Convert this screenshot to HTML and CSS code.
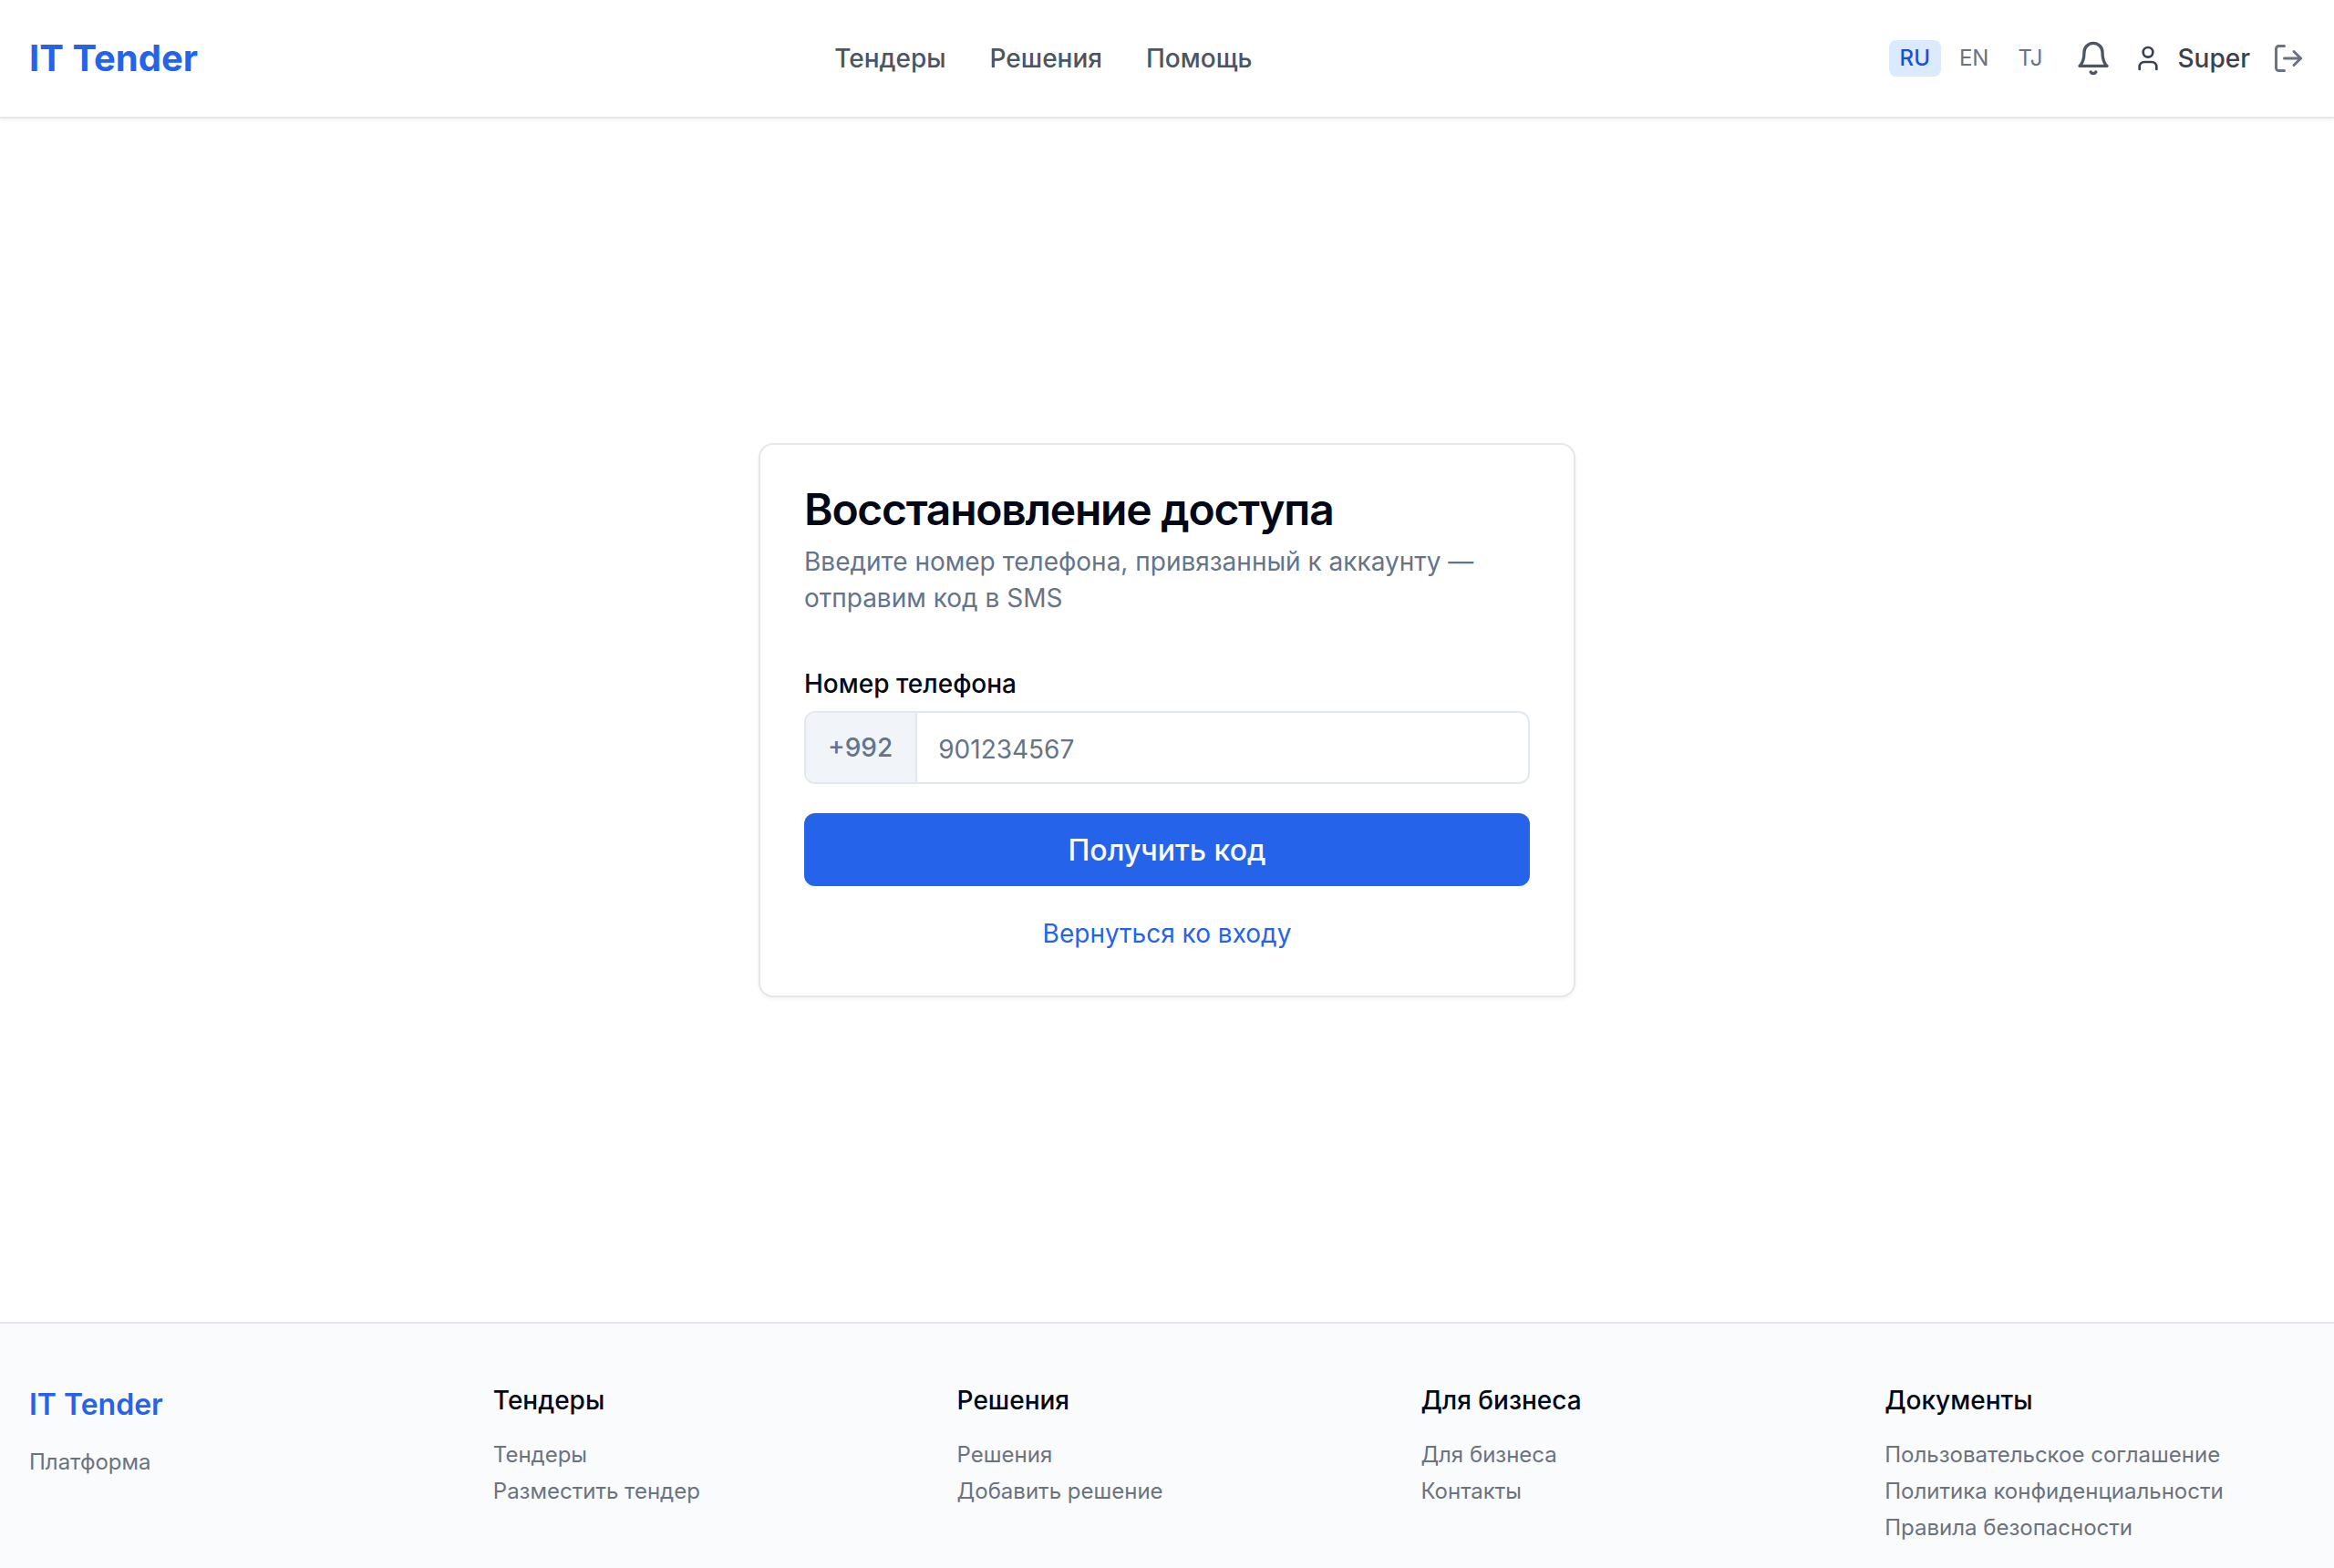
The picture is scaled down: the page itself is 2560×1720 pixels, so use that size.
FILE: index.html
```html
<!DOCTYPE html>
<html lang="ru">
<head>
    <meta charset="UTF-8">
    <meta name="viewport" content="width=device-width, initial-scale=1.0">
    <title>IT Tender</title>
    <link rel="stylesheet" href="styles.css">
</head>
<body>

<!-- Header -->
<header class="header">
    <a class="logo" href="#">IT Tender</a>
    <nav class="nav">
        <a href="#">Тендеры</a>
        <a href="#">Решения</a>
        <a href="#">Помощь</a>
    </nav>
    <div class="header-actions">
        <div class="langs">
            <button class="lang active">RU</button>
            <button class="lang">EN</button>
            <button class="lang">TJ</button>
        </div>
        <svg class="icon icon-bell" viewBox="0 0 24 24">
            <path d="M6 8a6 6 0 0 1 12 0c0 7 3 9 3 9H3s3-2 3-9"/>
            <path d="M10.3 21a1.94 1.94 0 0 0 3.4 0"/>
        </svg>
        <a class="user" href="#">
            <svg class="icon icon-user" viewBox="0 0 24 24">
                <path d="M19 21v-2a4 4 0 0 0-4-4H9a4 4 0 0 0-4 4v2"/>
                <circle cx="12" cy="7" r="4"/>
            </svg>
            <span>Super</span>
        </a>
        <svg class="icon icon-logout" viewBox="0 0 24 24">
            <path d="M9 21H5a2 2 0 0 1-2-2V5a2 2 0 0 1 2-2h4"/>
            <polyline points="16 17 21 12 16 7"/>
            <line x1="21" x2="9" y1="12" y2="12"/>
        </svg>
    </div>
</header>

<!-- Password recovery form -->
<main class="main">
    <div class="card">
        <h1>Восстановление доступа</h1>
        <p class="description">Введите номер телефона, привязанный к аккаунту — отправим код в SMS</p>
        <form class="form">
            <label for="phone">Номер телефона</label>
            <div class="phone">
                <span class="prefix">+992</span>
                <input type="tel" id="phone" placeholder="901234567">
            </div>
            <button class="button" type="button">Получить код</button>
            <a class="back-link" href="#">Вернуться ко входу</a>
        </form>
    </div>
</main>

<!-- Footer -->
<footer class="footer">
    <div>
        <div class="footer-logo">IT Tender</div>
        <p class="footer-text">Платформа</p>
    </div>
    <div>
        <h4>Тендеры</h4>
        <ul>
            <li><a href="#">Тендеры</a></li>
            <li><a href="#">Разместить тендер</a></li>
        </ul>
    </div>
    <div>
        <h4>Решения</h4>
        <ul>
            <li><a href="#">Решения</a></li>
            <li><a href="#">Добавить решение</a></li>
        </ul>
    </div>
    <div>
        <h4>Для бизнеса</h4>
        <ul>
            <li><a href="#">Для бизнеса</a></li>
            <li><a href="#">Контакты</a></li>
        </ul>
    </div>
    <div>
        <h4>Документы</h4>
        <ul>
            <li><a href="#">Пользовательское соглашение</a></li>
            <li><a href="#">Политика конфиденциальности</a></li>
            <li><a href="#">Правила безопасности</a></li>
        </ul>
    </div>
</footer>

</body>
</html>
```
FILE: styles.css
```css
* { box-sizing: border-box; margin: 0; padding: 0; }
body { display: flex; flex-direction: column; height: 100vh; overflow: hidden; font-family: Inter, sans-serif; font-size: 32px; line-height: 48px; color: #020817; background-color: #fff; }
a { color: inherit; text-decoration: none; }
button, input { font-family: inherit; border: none; background: none; }
ul { list-style: none; }

/* Header */
.header { display: flex; align-items: center; justify-content: space-between; height: 130px; padding: 0 32px; border-bottom: 2px solid #e5e7eb; background-color: #fff; box-shadow: 0 2px 4px rgba(0, 0, 0, 0.05); }
.logo { font-size: 40px; line-height: 56px; font-weight: 700; color: #2563eb; }
.nav { display: flex; gap: 48px; font-size: 28px; line-height: 40px; font-weight: 500; color: #4b5563; }
.header-actions { display: flex; align-items: center; gap: 24px; }
.langs { display: flex; gap: 8px; }
.lang { padding: 4px 12px; border-radius: 8px; font-size: 24px; line-height: 32px; color: #6b7280; cursor: pointer; }
.lang.active { background-color: #dbeafe; color: #1d4ed8; font-weight: 500; }
.icon { fill: none; stroke: currentColor; stroke-width: 2; stroke-linecap: round; stroke-linejoin: round; }
.icon-bell { width: 40px; height: 40px; color: #4b5563; }
.icon-user { width: 32px; height: 32px; }
.icon-logout { width: 36px; height: 36px; color: #6b7280; }
.user { display: flex; align-items: center; gap: 16px; font-size: 28px; line-height: 40px; font-weight: 500; color: #374151; }

/* Form card */
.main { flex: 1; display: flex; align-items: center; justify-content: center; }
.card { width: 896px; padding: 48px; border: 2px solid #e5e7eb; border-radius: 16px; background-color: #fff; box-shadow: 0 2px 4px rgba(0, 0, 0, 0.05); }
h1 { margin-bottom: 14px; font-size: 48px; line-height: 46px; font-weight: 600; letter-spacing: -0.026em; }
.description { font-size: 28px; line-height: 40px; color: #64748b; }
.form { display: flex; flex-direction: column; margin-top: 48px; }
label { padding: 5px 0 1px; font-size: 28px; line-height: 42px; font-weight: 500; }
.phone { display: flex; height: 80px; margin-top: 8px; border: 2px solid #e2e8f0; border-radius: 12px; overflow: hidden; }
.prefix { display: flex; align-items: center; padding: 0 25px 0 24px; border-right: 2px solid #e2e8f0; background-color: #f1f5f9; font-size: 28px; line-height: 40px; font-weight: 500; color: #64748b; }
#phone { flex: 1; padding: 3px 23px 0; font-size: 28px; outline: none; }
#phone::placeholder { color: #64748b; }
.button { height: 80px; margin-top: 32px; padding-top: 2px; border-radius: 12px; background-color: #2563eb; color: #f8fafc; font-size: 32px; line-height: 48px; font-weight: 500; cursor: pointer; }
.back-link { align-self: center; margin-top: 32px; font-size: 28px; line-height: 40px; color: #2563eb; }

/* Footer */
.footer { display: grid; grid-template-columns: repeat(5, 1fr); gap: 48px; height: 270px; padding: 64px 32px 0; border-top: 2px solid #e5e7eb; background-color: #fafbfd; }
.footer-logo { line-height: 50px; font-weight: 600; color: #2563eb; }
.footer-text { margin-top: 22px; font-size: 24px; line-height: 32px; color: #6b7280; }
.footer h4 { font-size: 28px; line-height: 40px; font-weight: 500; }
.footer ul { display: flex; flex-direction: column; gap: 8px; margin-top: 24px; font-size: 24px; line-height: 32px; color: #6b7280; }
```
